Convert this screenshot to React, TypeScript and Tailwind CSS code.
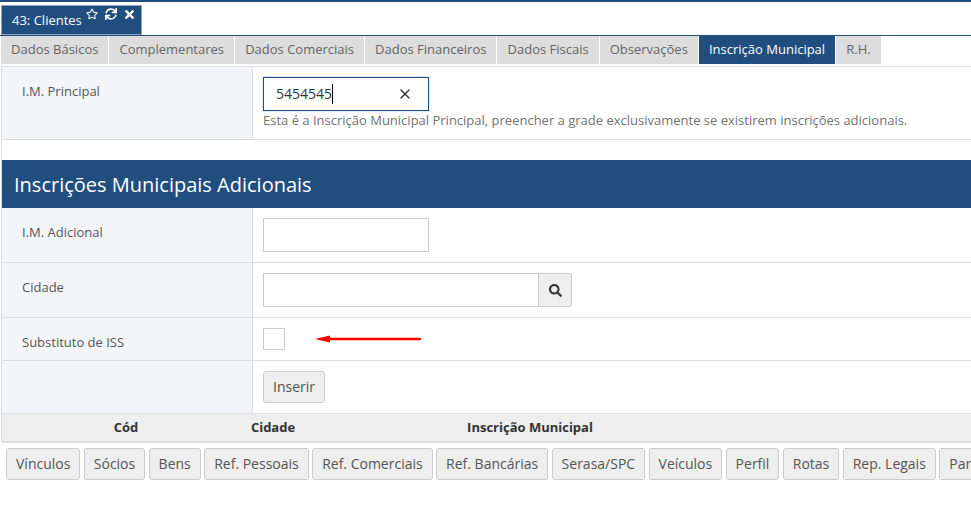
import { FaRegStar, FaSearch, FaSync, FaTimes } from "react-icons/fa";
import { X } from "lucide-react";

const tabs = [
  "Dados Básicos",
  "Complementares",
  "Dados Comerciais",
  "Dados Financeiros",
  "Dados Fiscais",
  "Observações",
  "Inscrição Municipal",
  "R.H.",
];

const bottomButtons = [
  "Vínculos",
  "Sócios",
  "Bens",
  "Ref. Pessoais",
  "Ref. Comerciais",
  "Ref. Bancárias",
  "Serasa/SPC",
  "Veículos",
  "Perfil",
  "Rotas",
  "Rep. Legais",
  "Parâmetros",
];

function FormRow({
  label,
  labelClass = "pt-[15px]",
  height,
  children,
}: {
  label?: string;
  labelClass?: string;
  height: string;
  children: React.ReactNode;
}) {
  return (
    <div className={`flex border-b border-[#dddddd] ${height}`}>
      <div className={`w-[251px] shrink-0 border-r border-[#dddddd] bg-[#f3f5f9] pl-5 text-[13px] leading-[18px] text-[#555555] ${labelClass}`}>
        {label}
      </div>
      <div className="flex-1 pl-[10px] pt-[10px]">{children}</div>
    </div>
  );
}

export default function App() {
  return (
    <div className="h-[506px] w-[971px] overflow-hidden bg-white font-['Open_Sans',sans-serif]">
      <div className="h-[2px] bg-[#1f4e7f]" />

      {/* Open page tab */}
      <div className="h-[34px] border-b border-[#1f4e7f] pl-px pt-[3px]">
        <div className="flex h-[30px] w-[141px] border border-[#8ca3bd] bg-[#1f4e7f] pl-[10px] text-white">
          <span className="pt-[5px] text-[13px] leading-[18px]">43: Clientes</span>
          <FaRegStar className="ml-[4px] mt-[2px] text-[12px]" />
          <FaSync className="ml-[7px] mt-[2px] text-[12px]" />
          <FaTimes className="ml-[6px] mt-[2px] text-[13px]" />
        </div>
      </div>

      {/* Section tabs */}
      <div className="flex h-[30px] pl-px">
        {tabs.map((tab) => (
          <div
            key={tab}
            className={`mr-px flex h-[28px] items-center px-[10.05px] text-[13px] ${
              tab === "Inscrição Municipal" ? "bg-[#1f4e7f] text-white" : "bg-[#dddddd] text-[#666666]"
            }`}
          >
            {tab}
          </div>
        ))}
      </div>

      <div className="ml-px border-b-2 border-l border-[#dddddd]">
        <div className="border-t border-[#dddddd]">
          <FormRow label="I.M. Principal" height="h-[73px]">
            <div className="flex h-[34px] w-[166px] items-center border border-[#1f4e7f] pl-3 text-sm text-[#333333] shadow-[0_0_2px_rgba(31,78,127,0.4)]">
              <span>5454545</span>
              <span className="h-[20px] w-px bg-black" />
              <X size={16} strokeWidth={2} className="ml-[64px] text-[#333333]" />
            </div>
            <p className="text-[13px] leading-[18px] text-[#737373]">
              Esta é a Inscrição Municipal Principal, preencher a grade exclusivamente se existirem inscrições adicionais.
            </p>
          </FormRow>
        </div>

        <div className="h-5" />

        <h2 className="flex h-[48px] items-center bg-[#1f4e7f] pl-3 pt-px text-[20px] font-normal text-white">
          Inscrições Municipais Adicionais
        </h2>

        <FormRow label="I.M. Adicional" height="h-[55px]">
          <div className="h-[34px] w-[166px] border border-[#cccccc]" />
        </FormRow>

        <FormRow label="Cidade" height="h-[55px]">
          <div className="flex h-[34px] w-[309px]">
            <div className="flex-1 border border-[#cccccc]" />
            <div className="flex w-[33px] items-center justify-center rounded-r-[3px] border border-l-0 border-[#cccccc] bg-[#eeeeee] text-[#333333]">
              <FaSearch className="text-[13px]" />
            </div>
          </div>
        </FormRow>

        <FormRow label="Substituto de ISS" labelClass="pt-[15px]" height="h-[43px]">
          <div className="flex items-center">
            <div className="h-[22px] w-[22px] border border-[#cccccc]" />
            <svg width="106" height="10" viewBox="0 0 106 10" className="-mt-px ml-[30px]">
              <path d="M14 5H105" stroke="#ff0000" strokeWidth="2.5" strokeLinecap="round" />
              <path d="M0 5L15 1.5V8.5Z" fill="#ff0000" />
            </svg>
          </div>
        </FormRow>

        <div className="flex h-[52px]">
          <div className="w-[251px] shrink-0 border-r border-[#dddddd] bg-[#f3f5f9]" />
          <div className="pl-[10px] pt-[10px]">
            <button className="h-[32px] rounded-[3px] border border-[#cccccc] bg-[#eeeeee] px-[9px] text-sm text-[#555555]">
              Inserir
            </button>
          </div>
        </div>

        {/* Empty grid header */}
        <div className="flex h-[28px] items-center border-t border-[#dddddd] bg-[#eeeeee] pt-px text-[13px] font-bold text-[#333333]">
          <div className="w-[248px] text-center">Cód</div>
          <div className="w-[46px] text-center">Cidade</div>
          <div className="w-[468px] text-center">Inscrição Municipal</div>
        </div>
      </div>

      {/* Related records */}
      <div className="mt-[5px] flex gap-[3.4px] pl-[6px]">
        {bottomButtons.map((label) => (
          <button
            key={label}
            className="h-[32px] shrink-0 rounded-[3px] border border-[#cccccc] bg-[#eeeeee] px-[9px] text-sm text-[#555555]"
          >
            {label}
          </button>
        ))}
      </div>
    </div>
  );
}
